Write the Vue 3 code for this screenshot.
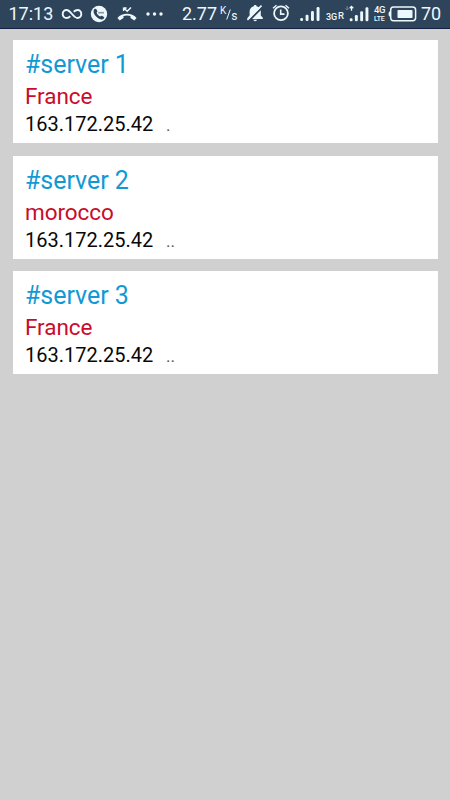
<script setup>
const servers = [
  { title: '#server 1', country: 'France', ip: '163.172.25.42', dots: '.' },
  { title: '#server 2', country: 'morocco', ip: '163.172.25.42', dots: '..' },
  { title: '#server 3', country: 'France', ip: '163.172.25.42', dots: '..' },
]
</script>

<template>
  <div class="screen">
    <header class="status">
      <span class="time">17:13</span>
      <svg class="infinity" width="22" height="14" viewBox="0 0 22 14">
        <path d="M9.300 9.200C8 10.400 7 11 5.600 11 3.300 11 1.700 9.200 1.700 7S3.300 3 5.600 3C9.700 3 12.300 11 16.400 11c2.300 0 3.900-1.800 3.900-4s-1.600-4-3.900-4c-1.400 0-2.400.6-3.700 1.800" fill="none" stroke="currentColor" stroke-width="1.900" />
      </svg>
      <svg class="call" width="18" height="18" viewBox="0 0 18 18">
        <circle cx="9" cy="9" r="8.200" fill="currentColor" />
        <path d="M4.400 4.100c.8-.7 1.500-.6 2 .2l.8 1.400c.4.7.1 1.200-.6 1.800.5 1.800 1.900 3.400 3.700 4 .7-.8 1.400-1 2.100-.5l1.200.8c.8.6.8 1.200.2 1.800-1.500 1.500-3.700 1.100-6.200-.8C4.500 10.600 2.300 6.800 4.400 4.100z" fill="#2e445a" />
        <path d="M8.200 7.700h5.800" stroke="#8998a4" stroke-width="1.600" />
      </svg>
      <svg class="missed" width="20" height="16" viewBox="0 0 20 16">
        <path d="M.4 11.900C5.300 6.300 14.700 6.300 19.600 11.900L17.300 14.500 13.500 12V10C11.200 9.300 8.800 9.300 6.500 10V12L2.700 14.500z" fill="currentColor" />
        <path d="M6.600 1.600v3.500M6.600 1.900h3M7 2.200l3.200 3L14 1.500" fill="none" stroke="currentColor" stroke-width="1.500" />
      </svg>
      <svg class="more" width="18" height="4" viewBox="0 0 18 4">
        <circle cx="2" cy="2" r="1.700" fill="currentColor" />
        <circle cx="8.500" cy="2" r="1.700" fill="currentColor" />
        <circle cx="15" cy="2" r="1.700" fill="currentColor" />
      </svg>
      <span class="speed">2.77</span>
      <span class="unit">
        <span class="k">K</span>
        <svg class="slash" width="5" height="11" viewBox="0 0 5 11"><path d="M4.300.5L.7 10.500" stroke="currentColor" stroke-width="1" /></svg>
        <span class="s">s</span>
      </span>
      <svg class="bell" width="18" height="18" viewBox="0 0 18 18">
        <path d="M9.200 1c.8 0 1.300.5 1.400 1.300 2.700.7 4.200 2.800 4.200 5.300v3.900l2 2.300v1.200H1.600v-1.200l2-2.300V7.600c0-2.500 1.500-4.600 4.200-5.300C7.900 1.500 8.400 1 9.200 1zM7.300 15.700h3.800c-.3 1.900-3.500 1.900-3.800 0z" fill="currentColor" />
        <path d="M3 16.700L17.500 2.200" stroke="#2e445a" stroke-width="2" />
        <path d="M1.400 15.800L15.500 1.600" stroke="currentColor" stroke-width="1.700" />
      </svg>
      <svg class="alarm" width="18" height="18" viewBox="0 0 18 18" fill="none" stroke="currentColor">
        <circle cx="9" cy="9.300" r="6.900" stroke-width="1.800" />
        <path d="M8.700 5.500v4.600h3.800" stroke-width="1.600" />
        <path d="M1 4.200l3.500-3M17 4.200l-3.500-3" stroke-width="1.400" />
      </svg>
      <svg class="signal" width="21" height="16" viewBox="0 0 21 16" fill="currentColor">
        <rect x=".2" y="12" width="2.900" height="3" rx="1.300" />
        <rect x="5.600" y="8.800" width="2.900" height="6.200" rx="1.200" />
        <rect x="11" y="5" width="2.900" height="10" rx="1.200" />
        <rect x="16.600" y="1" width="2.900" height="14" rx="1.200" />
      </svg>
      <span class="net">3G</span>
      <span class="roam">R</span>
      <svg class="signal-data" width="24" height="18" viewBox="0 0 24 18">
        <path d="M2.200 1v4M.6 3.300l1.600 1.700 1.600-1.700" fill="none" stroke="#72899b" stroke-width="1" />
        <path d="M6.500 1.500v4.200M4.700 3.200l1.800-1.800 1.800 1.800" fill="none" stroke="currentColor" stroke-width="1.300" />
        <g fill="currentColor">
          <rect x="4.700" y="13.300" width="2.900" height="2.900" rx="1.300" />
          <rect x="9.900" y="10" width="2.900" height="6.200" rx="1.200" />
          <rect x="15.200" y="6.200" width="2.900" height="10" rx="1.200" />
          <rect x="20.500" y="2.200" width="2.900" height="14" rx="1.200" />
        </g>
      </svg>
      <span class="lte"><span class="gen">4G</span><span class="term">LTE</span></span>
      <svg class="battery" width="29" height="16" viewBox="0 0 29 16">
        <path d="M5.400 1h19.200q3 0 3 3v7.800q0 3-3 3H5.400q-2.700 0-2.700-3V4q0-3 2.700-3z" fill="none" stroke="currentColor" stroke-width="1.500" />
        <path d="M2.400 5.200Q.6 5.200.6 7v2q0 1.700 1.800 1.700z" fill="currentColor" />
        <rect x="9.500" y="4" width="15" height="8" rx=".8" fill="currentColor" />
      </svg>
      <span class="level">70</span>
    </header>
    <main class="list">
      <article v-for="server in servers" :key="server.title" class="card">
        <div class="title">{{ server.title }}</div>
        <div class="country">{{ server.country }}</div>
        <div class="address">
          <span class="ip">{{ server.ip }}</span>
          <span class="dots">{{ server.dots }}</span>
        </div>
      </article>
    </main>
  </div>
</template>

<style>
body {
  background: #d0d0d0;
}
</style>

<style scoped>
.screen {
  height: 800px;
  box-sizing: border-box;
  overflow: hidden;
  background: #d0d0d0;
  font-family: Roboto, sans-serif;
}
.status {
  display: flex;
  align-items: flex-start;
  height: 28.500px;
  box-sizing: border-box;
  border-bottom: 1px solid #14203f;
  background: #2e445a;
  color: #edf8fc;
  white-space: nowrap;
}
.status > * {
  flex: none;
}
.time,
.speed,
.level {
  font-size: 18px;
  line-height: 22px;
  margin-top: 3px;
}
.time {
  width: 46px;
  margin-left: 8.500px;
}
.infinity {
  margin: 7px 0 0 6.500px;
}
.call {
  margin: 5px 0 0 7px;
}
.missed {
  margin: 6px 0 0 9px;
}
.more {
  margin: 12px 0 0 9px;
}
.speed {
  width: 36px;
  margin-left: 18px;
}
.unit {
  display: flex;
  width: 18px;
  margin: 5px 0 0 2px;
  font-size: 10px;
  line-height: 12px;
}
.slash {
  margin-top: 4px;
}
.s {
  font-size: 12px;
  line-height: 22px;
}
.bell {
  margin: 4px 0 0 8px;
}
.alarm {
  margin: 4px 0 0 8px;
}
.signal {
  margin: 6px 0 0 10px;
}
.net {
  width: 11px;
  margin: 11px 0 0 5px;
  font-size: 9px;
  line-height: 12px;
  font-weight: 500;
}
.roam {
  width: 6px;
  margin: 10px 0 0 1px;
  font-size: 9.500px;
  line-height: 12px;
  font-weight: 500;
}
.signal-data {
  margin: 5px 0 0 1px;
}
.lte {
  display: flex;
  flex-direction: column;
  width: 12px;
  margin: 5px 0 0 5px;
  font-weight: 500;
}
.gen {
  font-size: 9.500px;
  line-height: 10px;
  letter-spacing: -0.500px;
}
.term {
  font-size: 7px;
  line-height: 8px;
  letter-spacing: -0.200px;
}
.battery {
  margin: 6px 0 0 2px;
}
.level {
  margin-left: 4px;
}
.list {
  display: flex;
  flex-direction: column;
  gap: 12.600px;
  padding: 11.500px 12.500px;
}
.card {
  height: 103px;
  box-sizing: border-box;
  padding: 10px 12.500px;
  background: #fff;
}
.title {
  font-size: 25px;
  line-height: 30px;
  letter-spacing: -0.050px;
  color: #1299d4;
}
.country {
  margin-top: 3px;
  font-size: 22.500px;
  line-height: 27px;
  letter-spacing: -0.050px;
  color: #cb0b2b;
}
.address {
  display: flex;
  align-items: baseline;
  margin-top: 2px;
  line-height: 24px;
}
.ip {
  width: 141px;
  font-size: 20px;
  color: #080808;
}
.dots {
  font-size: 17px;
  color: #555;
}
</style>
